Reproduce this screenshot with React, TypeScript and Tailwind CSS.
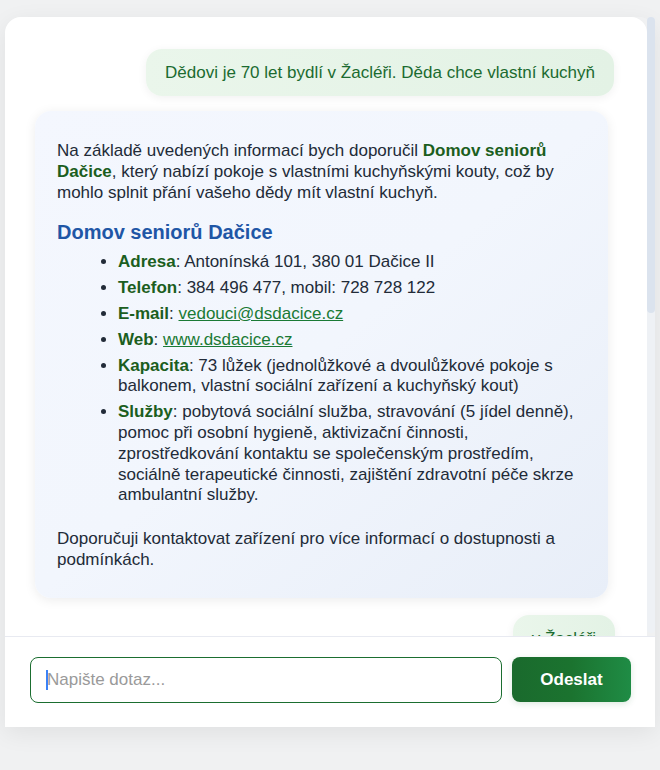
import React from "react";

const font = { fontFamily: '"Liberation Sans", Arial, Helvetica, sans-serif' };

export default function App() {
  return (
    <div className="min-h-screen bg-[#f0f1f2] pt-[17px] pl-[5px]" style={font}>
      <div className="w-[650px] flex flex-col shadow-[0_6px_24px_rgba(0,0,0,0.07)] rounded-t-2xl">
        <div className="h-[619px] flex">
          <div className="flex-1 bg-white rounded-t-2xl overflow-hidden flex flex-col">
            <div className="self-end mt-[32px] mr-[33px] rounded-2xl bg-gradient-to-r from-[#eaf6eb] to-[#e3f2e5] shadow-[0_2px_10px_rgba(0,0,0,0.06)] px-[19px] py-[13px] text-[17px] leading-[21px] text-[#1b6b30] whitespace-nowrap">
              Dědovi je 70 let bydlí v Žacléři. Děda chce vlastní kuchyň
            </div>
            <div className="mt-[15px] ml-[30px] w-[573px] rounded-2xl bg-gradient-to-br from-[#f4f7fe] via-[#f2f6fd] to-[#e8eef8] shadow-[0_2px_12px_rgba(0,0,0,0.08)] pt-[30px] pb-[27px] pl-[22px] pr-[20px] text-[17px] leading-[20.8px] text-[#222b38]">
              <p>
                Na základě uvedených informací bych doporučil{" "}
                <strong className="text-[#1b5e20]">Domov seniorů Dačice</strong>, který nabízí pokoje s vlastními
                kuchyňskými kouty, což by mohlo splnit přání vašeho dědy mít vlastní kuchyň.
              </p>
              <h3 className="mt-[17px] text-[20px] leading-[25px] font-bold text-[#1f56a6]">Domov seniorů Dačice</h3>
              <ul className="mt-[7px] list-disc pl-[61px] flex flex-col gap-[5px]">
                <li>
                  <strong className="text-[#1b5e20]">Adresa</strong>: Antonínská 101, 380 01 Dačice II
                </li>
                <li>
                  <strong className="text-[#1b5e20]">Telefon</strong>: 384 496 477, mobil: 728 728 122
                </li>
                <li>
                  <strong className="text-[#1b5e20]">E-mail</strong>:{" "}
                  <a className="text-[#1a7a35] underline">vedouci@dsdacice.cz</a>
                </li>
                <li>
                  <strong className="text-[#1b5e20]">Web</strong>:{" "}
                  <a className="text-[#1a7a35] underline">www.dsdacice.cz</a>
                </li>
                <li>
                  <strong className="text-[#1b5e20]">Kapacita</strong>: 73 lůžek (jednolůžkové a dvoulůžkové pokoje s
                  balkonem, vlastní sociální zařízení a kuchyňský kout)
                </li>
                <li>
                  <strong className="text-[#1b5e20]">Služby</strong>: pobytová sociální služba, stravování (5 jídel
                  denně), pomoc při osobní hygieně, aktivizační činnosti, zprostředkování kontaktu se společenským
                  prostředím, sociálně terapeutické činnosti, zajištění zdravotní péče skrze ambulantní služby.
                </li>
              </ul>
              <p className="mt-[23px]">
                Doporučuji kontaktovat zařízení pro více informací o dostupnosti a podmínkách.
              </p>
            </div>
            <div className="self-end mt-[17px] mr-[32px] rounded-2xl bg-gradient-to-r from-[#eaf6eb] to-[#e3f2e5] shadow-[0_2px_10px_rgba(0,0,0,0.06)] px-[19px] py-[13px] text-[17px] leading-[21px] text-[#1b6b30] whitespace-nowrap">
              v Žacléři
            </div>
          </div>
          <div className="w-[8px] h-[616px] bg-[#eef1f5] rounded-full flex flex-col">
            <div className="h-[296px] bg-[#dbe3ee] rounded-full" />
          </div>
        </div>
        <div className="h-[91px] bg-white border-t border-[#e8eaf1] pl-[25px] pr-[24px] pt-[20px] flex gap-[10px] items-start">
          <div className="relative w-[472px] h-[46px]">
            <input
              className="w-full h-full rounded-[8px] border border-[#1b6e30] bg-white pl-[16px] text-[17px] text-[#222b38] placeholder:text-[#9a9a9a] outline-none"
              placeholder="Napište dotaz..."
              style={font}
            />
            <span className="absolute left-[16px] top-[13px] w-[1.5px] h-[20px] bg-[#3b82f6]" />
          </div>
          <button
            className="w-[119px] h-[45px] rounded-[8px] bg-gradient-to-r from-[#1a6a2d] via-[#1b732f] to-[#1f8c45] text-white text-[17px] font-bold shadow-[0_2px_6px_rgba(27,110,48,0.15)]"
            style={font}
          >
            Odeslat
          </button>
        </div>
      </div>
    </div>
  );
}
